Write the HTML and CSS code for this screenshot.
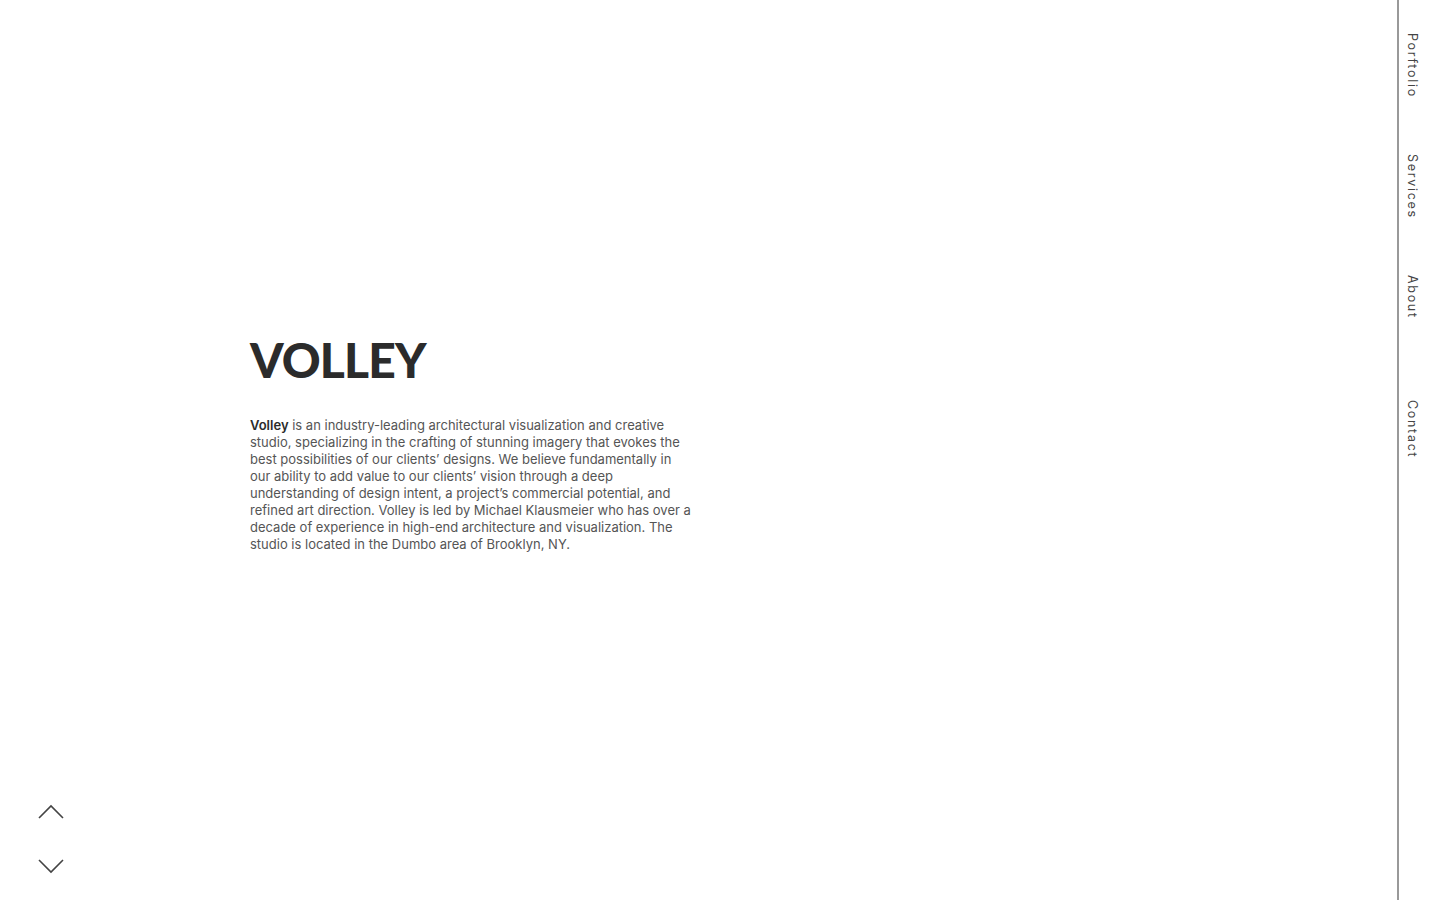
FILE: index.html
```html
<!DOCTYPE html>
<html lang="en">
<head>
<meta charset="utf-8">
<title>Volley</title>
<link rel="stylesheet" href="styles.css">
</head>
<body>
<div class="page">
  <main class="content">
    <section class="intro">
      <h1 class="title">VOLLEY</h1>
      <p class="desc"><strong>Volley</strong> is an industry-leading architectural visualization and creative studio, specializing in the crafting of stunning imagery that evokes the best possibilities of our clients’ designs. We believe fundamentally in our ability to add value to our clients’ vision through a deep understanding of design intent, a project’s commercial potential, and refined art direction. Volley is led by Michael Klausmeier who has over a decade of experience in high-end architecture and visualization. The studio is located in the Dumbo area of Brooklyn, NY.</p>
    </section>
    <div class="arrows">
      <button class="arrow" aria-label="Previous">
        <svg width="26" height="16" viewBox="0 0 26 16"><polyline points="1,14 13,2 25,14" fill="none" stroke="#444" stroke-width="1.6"/></svg>
      </button>
      <button class="arrow" aria-label="Next">
        <svg width="26" height="16" viewBox="0 0 26 16"><polyline points="1,2 13,14 25,2" fill="none" stroke="#444" stroke-width="1.6"/></svg>
      </button>
    </div>
  </main>
  <nav class="sidebar">
    <a class="nav-item" href="#">Porftolio</a>
    <a class="nav-item" href="#">Services</a>
    <a class="nav-item" href="#">About</a>
    <a class="nav-item nav-last" href="#">Contact</a>
  </nav>
</div>
</body>
</html>
```
FILE: styles.css
```css
html, body {
  margin: 0;
  padding: 0;
  background: #fff;
}
body {
  font-family: "Inter", "Liberation Sans", sans-serif;
  color: #444;
}
.page {
  display: flex;
  width: 1440px;
  height: 900px;
  overflow: hidden;
}
.content {
  flex: 1;
  position: relative;
  padding: 333px 0 0 250px;
  box-sizing: border-box;
}
.title {
  margin: 0;
  font-family: "Lato", "Liberation Sans", sans-serif;
  font-weight: 900;
  font-size: 48px;
  line-height: 54px;
  color: #2b2b2b;
  letter-spacing: -0.8px;
}
.desc {
  margin: 30px 0 0;
  width: 445px;
  font-size: 13px;
  letter-spacing: 0;
  line-height: 17px;
  color: #555;
  font-weight: 400;
}
.desc strong {
  color: #2b2b2b;
  font-weight: 600;
}
.arrows {
  position: absolute;
  left: 38px;
  bottom: 26px;
  display: flex;
  flex-direction: column;
  gap: 38px;
}
.arrow {
  border: 0;
  background: none;
  padding: 0;
  width: 26px;
  height: 16px;
  cursor: pointer;
}
.arrow svg {
  display: block;
}
.sidebar {
  width: 43px;
  border-left: 2px solid #999;
  display: flex;
  flex-direction: column;
  align-items: flex-start;
  padding: 33px 0 0 6px;
  box-sizing: border-box;
}
.nav-item {
  writing-mode: vertical-rl;
  height: 121px;
  font-size: 12.5px;
  letter-spacing: 1.7px;
  color: #444;
  text-decoration: none;
}
.nav-last {
  margin-top: 4px;
}
```
